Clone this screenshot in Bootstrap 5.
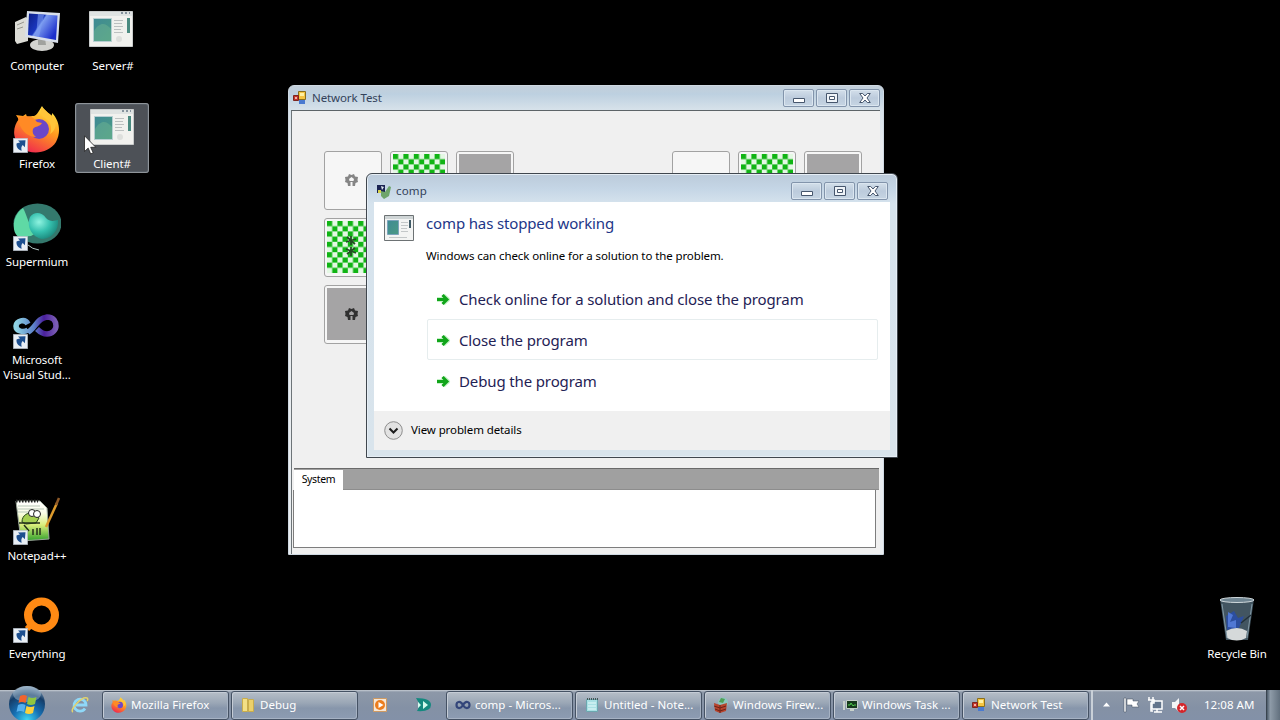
<!DOCTYPE html>
<html lang="en">
<head>
<meta charset="utf-8">
<meta name="viewport" content="width=device-width, initial-scale=1">
<title>Desktop</title>
<link href="https://cdn.jsdelivr.net/npm/bootstrap@5.3.0/dist/css/bootstrap.min.css" rel="stylesheet">
<style>
body{width:1280px;height:720px;background:#000;font:11.5px/15px "Noto Sans","Open Sans",sans-serif;letter-spacing:-.1px;color:#000}
svg{display:block;flex:none}
.t{white-space:nowrap}
/* desktop icons */
.icons{display:grid;grid-template-columns:74px 76px;grid-auto-rows:98px;padding-top:5px}
.dicon{width:74px;height:70px;color:#fff;padding-top:2px;position:relative;text-align:center}
.dicon .pic{height:51px}
.c1{grid-column:1}.c2{grid-column:2}
.sel{background:#4d5157;outline:1px solid #8f9499;outline-offset:-1px;border-radius:3px;margin-left:1px;box-shadow:inset 0 0 0 2px #555c64}
.pointer{position:absolute;left:9px;top:32px}
/* windows */
.win{position:absolute;border-radius:6px 6px 0 0}
.titlebar{color:#33425a}
.cap{width:31px;height:18px;border:1px solid #8294ab;border-radius:2px;background:linear-gradient(#d3dfea,#bccbdc 50%,#c6d5e3);box-shadow:inset 0 0 0 1px #dbe6f0}
.w1{left:288px;top:85px;width:596px;height:470px;background:linear-gradient(#c3cfda,#bdd0e0 8px,#d7e2ea 24px,#e9edf0 60px);border:1px solid #cfd9e2}
.w1 .titlebar{height:24px;padding:0 3px 1px}
.client{margin:0 3px 0 2px;height:444px;background:#f0f0f0;border-top:1px solid #5d6468;border-left:1px solid #6d7478}
.groups{padding:40px 18px 0 32px;height:357px}
.tiles{display:grid;grid-template-columns:repeat(3,58px);grid-auto-rows:58.5px;gap:8.7px 8px}
.tile{border:1px solid #a2a2a2;border-radius:3px;background:#f6f6f6;padding:2px;position:relative}
.tile i{display:block;width:52px;height:52px}
.tile svg{position:absolute;left:20px;top:22px}
.tile .stars{left:18px;top:15px}
.tile .chk{position:static;width:52px;height:52px}
.gry i{background:#a5a4a5}
.tabs{height:22px;background:#a0a0a0;border-top:1px solid #6a6a6a;border-bottom:1px solid #8d8d8d}
.tab1{width:49px;height:20px;background:#fff;margin-top:1px;font-size:10.5px;line-height:19px;letter-spacing:-.35px}
.pane{height:58px;background:#fff;border:1px solid #7d7d7d;border-top:0;width:583px;margin-left:-1px}
.w2{left:366px;top:173px;width:532px;height:285px;border:1px solid #40474e;background:linear-gradient(#bccbda,#c4d5e5 14px,#d6e3ed 30px,#d9e4ec);box-shadow:inset 0 0 0 1px #e6eef5}
.w2 .titlebar{height:28px;padding:5px 9px 0 9px}
.w2 .titlebar .t{letter-spacing:.15px}
.body2{margin:0 7px 0 7px;height:248px;background:#fff}
.intro{padding:12px 0 0 10px;height:117px}
.h1x{font-size:15px;line-height:18px;color:#1d3688;letter-spacing:-.14px;margin-bottom:16px}
.cmds{margin:-41px 12px 0 53px}
.cmd{height:41px;font-size:15px;line-height:20px;color:#1f2255;padding-left:7px;border:1px solid transparent;border-radius:2px;letter-spacing:-.13px}
.cmd.on{border-color:#e6edee}
.foot{height:39px;background:#f0f0f0;padding-left:10px}
.foot .t,.bar .t{padding-bottom:2px}
/* taskbar */
.bar{position:absolute;left:0;top:690px;width:1280px;height:30px;background:linear-gradient(#c6ccd3,#8d98a8 2px,#8491a5 60%,#8391a8);color:#fff;letter-spacing:.04px}
.tb{width:127px;height:29px;margin:1px 2px 0 0;padding:0 8px 1px;border:1px solid #455264;border-radius:3px;background:linear-gradient(#b6bec8,#9ba7b6 40%,#8796ab 60%,#8d9cb2);box-shadow:inset 1px 1px 0 #c5ccd6,inset -1px -1px 0 #a6b2c3}
.start{margin-top:-8px}
.flat{width:43px}
.flat.ie{width:42px;padding-left:10px}
.tray{width:189px;border-left:2px solid #c9d0d8}
.deskbtn{width:14px;height:30px;background:linear-gradient(90deg,#4a5968,#8e9ba8 25%,#62707e);border-left:1px solid #39444f}
</style>
</head>
<body class="overflow-hidden position-relative">
<svg width="0" height="0" class="position-absolute">
<defs>
<linearGradient id="ff" x1=".8" y1="0" x2=".3" y2="1"><stop offset="0" stop-color="#fff04a"/><stop offset=".45" stop-color="#ff9a1f"/><stop offset="1" stop-color="#f0264f"/></linearGradient>
<linearGradient id="teal" x1="0" y1="0" x2="1" y2="1"><stop offset="0" stop-color="#3f8a94"/><stop offset="1" stop-color="#4a9a84"/></linearGradient>
<linearGradient id="scr" x1="0" y1="0" x2="1" y2=".6"><stop offset="0" stop-color="#0d1f86"/><stop offset=".45" stop-color="#1a37c0"/><stop offset=".5" stop-color="#7d9df0"/><stop offset="1" stop-color="#1c2fcc"/></linearGradient>
<linearGradient id="vs" x1="0" y1="0" x2="1" y2="0"><stop offset="0" stop-color="#8fd4e4"/><stop offset=".45" stop-color="#5c80c8"/><stop offset=".7" stop-color="#4a1f9c"/><stop offset="1" stop-color="#7a5cb4"/></linearGradient>
<radialGradient id="sm" cx=".35" cy=".35" r=".75"><stop offset="0" stop-color="#8ff3e0"/><stop offset=".5" stop-color="#35c0ae"/><stop offset="1" stop-color="#177f74"/></radialGradient>
<radialGradient id="orb" cx=".5" cy=".95" r=".95"><stop offset="0" stop-color="#3fd8f5"/><stop offset=".4" stop-color="#1670b4"/><stop offset=".75" stop-color="#153d68"/><stop offset="1" stop-color="#8fa9bf"/></radialGradient>
<linearGradient id="np" x1="0" y1="0" x2="0" y2="1"><stop offset="0" stop-color="#fff"/><stop offset=".3" stop-color="#fbfde8"/><stop offset=".6" stop-color="#d9ee7a"/><stop offset="1" stop-color="#2fa02a"/></linearGradient>
<pattern id="check" width="10.400" height="10.400" patternUnits="userSpaceOnUse"><path fill="#e4f8e4" d="M0 0h10.400v10.400H0z"/><path fill="#10b414" d="M0 0h5.200v5.200H0zM5.200 5.200h5.200v5.200H5.200z"/></pattern>
<symbol id="checker" viewBox="0 0 52 52"><path fill="url(#check)" d="M0 0h52v52H0z"/></symbol>
<symbol id="short" viewBox="0 0 15 15"><path fill="#e9eff5" stroke="#a9b4c0" stroke-width=".6" d="M.3.3h14.4v14.4H.3z"/><path fill="#1d4f8f" d="M5 2.500l7.500-.3-.6 7-2.200-2.100c-1.500 1.500-1.700 3.500-1 5.700C4.500 11.500 3 8.200 3.600 5.500 4 5 5.600 5 7 4.500z"/></symbol>
<symbol id="app" viewBox="0 0 44 36"><path fill="#f1f1ee" stroke="#c9cccc" d="M.5.5h43v35H.5z"/><path fill="#dfe3e2" d="M1 1h42v4H1z"/><path stroke="#6a7a88" stroke-width="1.500" stroke-dasharray="2 2" d="M32 2h9"/><path fill="url(#teal)" stroke="#b7cfd2" d="M4.500 7.500h18v23h-18z"/><path fill="#73b893" opacity=".45" d="M5 20c6-10 12-8 17-2v12H5z"/><path stroke="#bcc0c0" d="M25 9.500h9M25 12.500h8M25 15.500h9M25 18.500h7M25 21.500h9"/><circle cx="30" cy="28" r="3" fill="#dddfdc"/><path fill="#4a8a80" d="M38 7h3v15h-3z"/></symbol>
<symbol id="fox" viewBox="0 0 48 48"><path fill="url(#ff)" d="M29 1c2 4 7 6 8 11 2-1 2-2 2-4 8 8 9 20 4 29-7 11-24 14-34 6C-2 34 0 21 6 14c-1-1-2-2-3-4l7 1 3-2 1 3c3-1 5-1 7-1 3-1 5-5 8-10z"/><circle cx="26" cy="24" r="10" fill="#6b47c8"/><path fill="#ff8a25" d="M5 13c9-4 15-2 19 4l5 1c-2 4-7 3-9 6-1 3 0 6 3 8-9 0-17-8-18-19z"/><path fill="#ffc53a" d="M30 12c7 3 10 10 7 17 5-3 7-9 5-15-4-5-10-8-13-12-2 4-1 7 1 10z"/></symbol>
<symbol id="form" viewBox="0 0 16 16"><path fill="#f5c542" stroke="#8a6f1c" d="M6.500 1.500h7v8h-7z"/><path fill="#fff1a3" d="M8 3h4v3H8z"/><path fill="#c4352a" stroke="#7c2620" d="M1.500 5.500h5v5h-5z"/><path fill="#f3b3a8" d="M3 7h2v2H3z"/><path fill="#4a7ad0" d="M7 10h6v4H7z"/></symbol>
<symbol id="gear" viewBox="0 0 13 12"><path fill="currentColor" fill-rule="evenodd" d="M4 0l2.500 1L9 0l1 2.500 3 .5-.5 3 .5 2-2.500 1L10 12H7.500V8h-2v4H3L2.500 9 0 8l.5-2L0 3l3-.5zM6.500 3L4 5l.5 2h4L9 5z"/></symbol>
<symbol id="inf" viewBox="0 0 46 24"><path fill="none" stroke="url(#vs)" stroke-width="5.500" d="M15 16C10 19 3 17 3 12S12 4 15 10M15 18C22 15 24 4 34 3c7 0 9 5 9 9s-4 8-9 8-8-3-10-5"/></symbol>
<symbol id="cmin" viewBox="0 0 12 12"><path fill="#fff" stroke="#46566d" d="M.5 6.500h11v4H.5z"/></symbol>
<symbol id="cmax" viewBox="0 0 12 12"><path fill="#eef3f8" stroke="#46566d" d="M.5 1.500h11v9H.5z"/><path fill="#fff" stroke="#46566d" d="M3.500 4.500h5v3h-5z"/></symbol>
<symbol id="cx" viewBox="0 0 12 12"><path fill="#fff" stroke="#46566d" d="M.7 1.500h3L6 4l2.300-2.500h3L8 6l3.300 4.500h-3L6 8l-2.300 2.500h-3L4 6z"/></symbol>
<symbol id="arr" viewBox="0 0 16 14"><path fill="none" stroke="#c4f2c6" stroke-width="5" stroke-linejoin="round" d="M2 7.500h10M8 3.500l4.500 4-4.500 4"/><path fill="none" stroke="#11a51a" stroke-width="3" d="M2 7.500h10M7.500 3l4.500 4.500L7.500 12"/></symbol>
</defs></svg>

<main class="icons">
 <div class="dicon c1"><div class="pic"><svg class="mx-auto" width="48" height="48" viewBox="0 0 48 48"><path fill="#dcdcd6" d="M2 15l11-5 2 2v22L4 37l-2-3z"/><path stroke="#96968f" d="M4 18l7-3M4 22l6-2"/><ellipse cx="29" cy="38" rx="12" ry="6" fill="#d2d3cf"/><path fill="#a0a29e" d="M25 31h7l1 7h-8z"/><path fill="#d8dfea" d="M14 4l33 2-2 30-33-6z"/><path fill="url(#scr)" d="M16 6.500l28.500 2L43 33l-28-5z"/><path fill="#7d9ff2" d="M25 7l6 1-5 22-3-1z" opacity=".6"/></svg></div><span class="t">Computer</span></div>
 <div class="dicon c2"><div class="pic pt-1"><svg class="mx-auto" width="44" height="36"><use href="#app"/></svg></div><span class="t ps-1">Server#</span></div>
 <div class="dicon c1"><div class="pic"><svg class="mx-auto" width="48" height="48"><use href="#fox" width="48" height="48"/><use href="#short" x="0" y="33" width="15" height="15"/></svg></div><span class="t">Firefox</span></div>
 <div class="dicon c2 sel"><div class="pic pt-1"><svg class="mx-auto" width="44" height="36"><use href="#app"/></svg></div><span class="t">Client#</span>
  <svg class="pointer" width="13" height="20" viewBox="0 0 13 20"><path fill="#fff" stroke="#222" stroke-width=".8" d="M.5.800v15.700l3.700-3.400 2.500 5.800 2.500-1.100-2.500-5.500h5.100z"/></svg></div>
 <div class="dicon c1"><div class="pic"><svg class="mx-auto" width="48" height="48" viewBox="0 0 48 48"><ellipse cx="24.500" cy="20.500" rx="24" ry="20" fill="#34796d"/><path fill="#5fd9a5" d="M10 5C-1 12-2 30 6 34l12-1 5-3C16 24 14 12 10 5z"/><path fill="url(#sm)" d="M17 14c4-6 12-5 16 1 4 4 8 3 12 2 1 9-5 18-15 19-11-1-17-13-13-22z"/><path fill="none" stroke="#b3c9c6" d="M15 42q4 4 11 5"/><use href="#short" x="0" y="33" width="15" height="15"/></svg></div><span class="t">Supermium</span></div>
 <div class="dicon c1" style="grid-row:4"><div class="pic"><svg class="mx-auto" width="48" height="48"><use href="#inf" x="0" y="13" width="46" height="24"/><use href="#short" x="0" y="33" width="15" height="15"/></svg></div><span class="t">Microsoft</span><br><span class="t">Visual Stud...</span></div>
 <div class="dicon c1" style="grid-row:6"><div class="pic"><svg class="mx-auto" width="48" height="48" viewBox="0 0 48 48"><path fill="url(#np)" stroke="#9aa79a" d="M3 4h24l7 7 2 31-28 2z"/><path fill="none" stroke="#222" stroke-width="3" stroke-dasharray="1.500 1.500" d="M3 4h22"/><path stroke="#b9c9b9" d="M5 9h22M5 12h26M5 15h10"/><path fill="#a5cf52" stroke="#24451b" d="M9 25c0-7 6-10 12-9l5 5-3 5-10 1z"/><circle cx="19" cy="16" r="3.500" fill="#fff" stroke="#222"/><circle cx="24" cy="17" r="3.500" fill="#fff" stroke="#222"/><path fill="none" stroke="#25301b" stroke-width="1.500" d="M6 26h21M11 28l5 6m4-2v6m4-7v7m3-7v7"/><path stroke="#dc9a2c" stroke-width="2.500" d="M33 30L44 6"/><path stroke="#8f5a28" stroke-width="2.500" d="M43 8l3-7"/><use href="#short" x="0" y="33" width="15" height="15"/></svg></div><span class="t">Notepad++</span></div>
 <div class="dicon c1" style="grid-row:7"><div class="pic"><svg class="mx-auto" width="48" height="48" viewBox="0 0 48 48"><circle cx="28.500" cy="20" r="13.500" fill="none" stroke="#ff8a14" stroke-width="8"/><path stroke="#ff8a14" stroke-width="6" d="M19 29l-5 5"/><use href="#short" x="0" y="33" width="15" height="15"/></svg></div><span class="t">Everything</span></div>
</main>

<div class="dicon position-absolute" style="left:1200px;top:593px"><div class="pic"><svg class="mx-auto" width="48" height="48" viewBox="0 0 48 48"><path fill="#4e6472" opacity=".85" d="M7 4h34l-6 41H13z"/><path fill="#2c4e9e" d="M13 21l8-5 4 7 6-2-5 12-12 2z"/><path fill="#5078d4" d="M15 17l5 3-3 7 6-2v8l-8-1z"/><path fill="#d5d9da" d="M13 36q11-6 21 0l-1 7q-9 5-19 0z"/><path stroke="#8299a5" d="M39 9l-5 34M9 9l5 34" fill="none"/><path stroke="#22303a" stroke-width="1.500" d="M38 20l-10 8"/><ellipse cx="24" cy="5" rx="17" ry="2.500" fill="#6f8592" stroke="#cfd8dc"/></svg></div><span class="t">Recycle Bin</span></div>

<section class="win w1">
 <header class="titlebar d-flex align-items-center">
  <svg width="16" height="16"><use href="#form"/></svg><span class="t ms-1">Network Test</span>
  <div class="d-flex ms-auto" style="gap:2px"><div class="cap d-flex align-items-center justify-content-center"><svg width="12" height="12"><use href="#cmin"/></svg></div><div class="cap d-flex align-items-center justify-content-center"><svg width="12" height="12"><use href="#cmax"/></svg></div><div class="cap d-flex align-items-center justify-content-center"><svg width="12" height="12"><use href="#cx"/></svg></div></div>
 </header>
 <div class="client">
  <div class="groups d-flex justify-content-between">
   <div class="tiles align-content-start">
    <div class="tile"><svg width="13" height="12" style="color:#858585"><use href="#gear"/></svg></div><div class="tile"><svg class="chk"><use href="#checker"/></svg></div><div class="tile gry"><i></i></div>
    <div class="tile"><svg class="chk"><use href="#checker"/></svg><svg class="stars" width="16" height="24" viewBox="0 0 16 24"><path stroke="#244c24" stroke-width="1.800" d="M8 2v9M4 3l8 7M13 5L3 8M8 13v9M3 15l10 4M12 14L4 20"/></svg></div><div class="tile"></div><div class="tile"></div>
    <div class="tile gry"><i></i><svg width="13" height="12" style="color:#303030"><use href="#gear"/></svg></div><div class="tile"></div><div class="tile"></div>
   </div>
   <div class="tiles align-content-start">
    <div class="tile"></div><div class="tile"><svg class="chk"><use href="#checker"/></svg></div><div class="tile gry"><i></i></div>
   </div>
  </div>
  <div style="padding:0 1px 0 2px">
   <div class="tabs"><div class="tab1 text-center">System</div></div>
   <div class="pane"></div>
  </div>
 </div>
</section>

<section class="win w2">
 <header class="titlebar d-flex align-items-center">
  <svg width="16" height="16" viewBox="0 0 16 16"><path fill="#1b2352" d="M1 2h8v8H1z"/><path fill="#d9d24c" d="M2 7h3v3H2z"/><path fill="#6ea56b" d="M5 8l4 1 4-6 2 1-2 9-5 3-3-3z"/><path fill="#dfe9ef" d="M5 3l3 1-2 3z"/></svg><span class="t ms-1">comp</span>
  <div class="d-flex ms-auto" style="gap:2px"><div class="cap d-flex align-items-center justify-content-center"><svg width="12" height="12"><use href="#cmin"/></svg></div><div class="cap d-flex align-items-center justify-content-center"><svg width="12" height="12"><use href="#cmax"/></svg></div><div class="cap d-flex align-items-center justify-content-center"><svg width="12" height="12"><use href="#cx"/></svg></div></div>
 </header>
 <div class="body2 d-flex flex-column">
  <div class="intro d-flex">
   <svg width="30" height="26" viewBox="0 0 30 26" style="margin-top:1px"><path fill="#f3f4f3" stroke="#6d7274" d="M.5.500h29v25H.5z"/><path fill="#cfd5d6" d="M1 1h28v3H1z"/><path fill="url(#teal)" stroke="#7ba3bb" d="M3.500 5.500h11v14h-11z"/><path stroke="#c3c7c8" d="M17 7.500h7M17 10.500h7M17 13.500h6M17 16.500h7M5 22.500h18"/><path fill="#3f5a66" d="M25 5h2v8h-2z"/></svg>
   <div style="padding-left:12px"><div class="t h1x">comp has stopped working</div><div class="t">Windows can check online for a solution to the problem.</div></div>
  </div>
  <div class="cmds">
   <div class="cmd d-flex align-items-center gap-2"><svg width="16" height="14"><use href="#arr"/></svg><span class="t">Check online for a solution and close the program</span></div>
   <div class="cmd on d-flex align-items-center gap-2"><svg width="16" height="14"><use href="#arr"/></svg><span class="t">Close the program</span></div>
   <div class="cmd d-flex align-items-center gap-2"><svg width="16" height="14"><use href="#arr"/></svg><span class="t">Debug the program</span></div>
  </div>
  <footer class="foot d-flex align-items-center mt-auto"><svg width="19" height="19" viewBox="0 0 19 19"><circle cx="9.500" cy="9.500" r="8.800" fill="#e2e2e2" stroke="#8d8d8d"/><path fill="none" stroke="#1c1c1c" stroke-width="2" d="M5.500 7.500l4 4 4-4"/></svg><span class="t ms-2">View problem details</span></footer>
 </div>
</section>

<footer class="bar d-flex">
 <svg class="start" width="60" height="38" viewBox="0 0 60 38"><circle cx="27" cy="22" r="18" fill="url(#orb)"/><ellipse cx="27" cy="12" rx="14" ry="8" fill="#b5cad9" opacity=".45"/><path fill="#f0642e" d="M20 14q4-2 7 0l-1.500 7q-4-2-7 0z"/><path fill="#8fc640" d="M28.500 15q4 2 8 0L35 22q-4 2-8 0z"/><path fill="#55b0ee" d="M18 23q4-2 7.500 0L24 30q-4-2-7.500 0z"/><path fill="#fbd13c" d="M26.500 24q4 2 8 0L33 31q-4 2-8 0z"/></svg>
 <div class="flat ie d-flex align-items-center"><svg width="19" height="18" viewBox="0 0 19 18"><path fill="none" stroke="#8fd8f8" stroke-width="2.800" d="M15 12.500A6 6 0 1 1 16 9H6"/><path fill="none" stroke="#e3d36c" stroke-width="1.500" d="M3 16c-4-2 9-16 14-14 1 0 1 2 0 3"/></svg></div>
 <div class="tb d-flex align-items-center gap-1"><svg width="16" height="16"><use href="#fox"/></svg><span class="t">Mozilla Firefox</span></div>
 <div class="tb d-flex align-items-center gap-1"><svg width="16" height="16" viewBox="0 0 16 16"><path fill="#f3df86" stroke="#c9ad4c" d="M2.500 1.500h5v13h-5z"/><path fill="#ecd06a" stroke="#c9ad4c" d="M8.500 2.500h5v12h-5z"/></svg><span class="t">Debug</span></div>
 <div class="flat d-flex align-items-center" style="padding-left:12px"><svg width="16" height="16" viewBox="0 0 16 16"><path fill="#f6e7d6" stroke="#cf9a62" d="M1.500 1.500h13v13h-13z"/><circle cx="8" cy="8" r="5" fill="#ec7d1d"/><path fill="#fff" d="M6.500 5l5 3-5 3z"/></svg></div>
 <div class="flat d-flex align-items-center" style="padding-left:12px"><svg width="17" height="16" viewBox="0 0 17 16"><path fill="#14897f" d="M1 1q15 0 15 7T2 14l3-6z"/><path fill="#d2fbee" d="M3 5l3 3-3 3zM8 4l5 4-5 4z"/></svg></div>
 <div class="tb d-flex align-items-center gap-1"><svg width="16" height="10" viewBox="0 0 16 10"><path fill="none" stroke="#33467a" stroke-width="2.200" d="M8 5C5 0 1.500 2 1.500 5S5 10 8 5s6.500-3 6.500 0S11 10 8 5"/></svg><span class="t">comp - Micros...</span></div>
 <div class="tb d-flex align-items-center gap-1"><svg width="16" height="16" viewBox="0 0 16 16"><path fill="#a9e0e4" stroke="#6ca8b0" d="M2.500 2.500h11v12h-11z"/><path stroke="#455" stroke-dasharray="1 1" stroke-width="2" d="M3 2h11"/><path stroke="#e6fafa" d="M4 6h8M4 9h8M4 12h8"/></svg><span class="t">Untitled - Note...</span></div>
 <div class="tb d-flex align-items-center gap-1"><svg width="16" height="16" viewBox="0 0 16 16"><circle cx="10" cy="5.500" r="5" fill="#8cc6bd"/><path fill="#4f9f56" d="M8 1l4 1-2 4-4-1z"/><path fill="#b8442d" d="M1 6l6 2 7-2-1 8-6 2-5-2z"/><path stroke="#6e2418" d="M1 9l6 2 6-2M2 12l5 2 6-2M7 8v8" fill="none"/></svg><span class="t">Windows Firew...</span></div>
 <div class="tb d-flex align-items-center gap-1"><svg width="16" height="16" viewBox="0 0 16 16"><path fill="#163a1c" stroke="#c6d0ca" d="M4.500 3.500h11v8h-11z"/><path stroke="#4ecb4b" fill="none" d="M6 8h2l1-2 2 3 1-1h2"/><path fill="#c8d2cc" d="M1 4h2v9H1zM8 12h4v2H8z"/></svg><span class="t">Windows Task ...</span></div>
 <div class="tb d-flex align-items-center gap-1"><svg width="16" height="16"><use href="#form"/></svg><span class="t">Network Test</span></div>
 <div class="tray ms-auto d-flex align-items-center">
  <svg width="86" height="20" viewBox="0 0 86 20" style="margin-left:9px"><path fill="#fff" d="M1 11.500l3.500-4 3.500 4z"/><g transform="translate(2)" fill="#fff" stroke="#3d4a5a" stroke-width=".5"><path d="M20 3h2v14h-2z"/><path d="M23 4h6v2h6l-2 3 2 3h-7v-2h-5z"/></g><g transform="translate(1)"><path fill="#63758c" stroke="#fff" stroke-width="1.500" d="M49 6h10v8H49z"/><path fill="none" stroke="#fff" stroke-width="1.500" d="M51 17h8M54 14v3M46 2v3M50 2v3M45 5h6v3h-3v8h2"/></g><g transform="translate(2)"><path fill="#f3f5f7" d="M68 7h3l4-4v14l-4-4h-3z"/><circle cx="78" cy="13" r="5" fill="#d5262b"/><path stroke="#fff" stroke-width="1.500" d="M76 11l4 4M80 11l-4 4"/></g></svg>
  <span class="t" style="margin-left:16px">12:08 AM</span>
  <div class="deskbtn ms-auto"></div>
 </div>
</footer>
<script src="https://cdn.jsdelivr.net/npm/bootstrap@5.3.0/dist/js/bootstrap.bundle.min.js"></script>
</body>
</html>
